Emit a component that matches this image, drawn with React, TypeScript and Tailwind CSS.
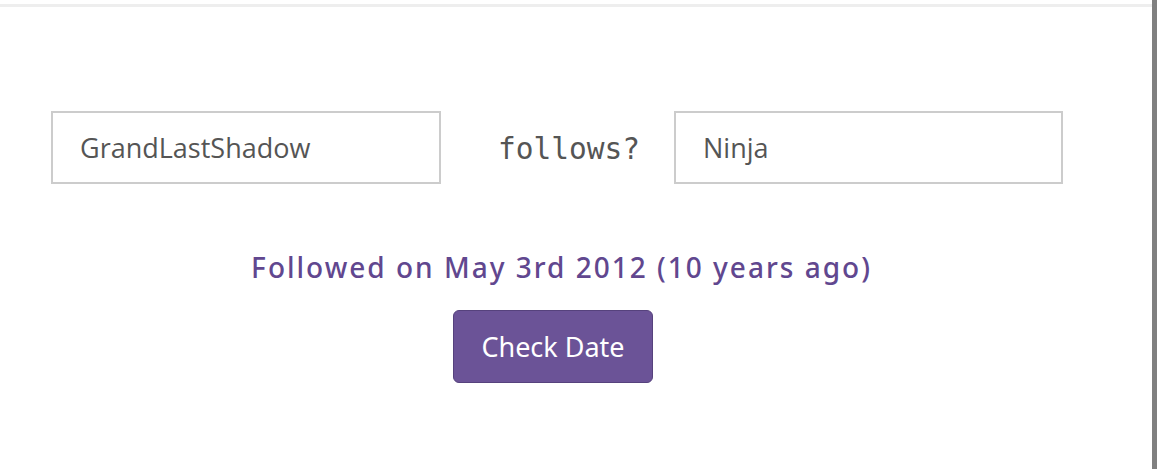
import React from "react";

const App = () => {
  return (
    <div className="flex h-[469px] w-full overflow-hidden bg-white">
      <div className="flex flex-1 flex-col">
        <div className="mt-[4px] h-[3px] bg-[#eeeeee]" />

        <main className="flex w-[1106px] flex-col items-center pt-[104px]">
          <div className="flex w-full items-center pl-[51px]">
            <input
              readOnly
              value="GrandLastShadow"
              className="h-[73px] w-[390px] border-2 border-[#cccccc] px-[27px] font-['Open_Sans',sans-serif] text-[27px] text-[#555555] outline-none"
            />
            <span className="w-[233px] pt-[3px] pl-[57px] font-['DejaVu_Sans_Mono',monospace] text-[29.5px] text-[#555555]">
              follows?
            </span>
            <input
              readOnly
              value="Ninja"
              className="h-[73px] w-[389px] border-2 border-[#cccccc] px-[27px] font-['Open_Sans',sans-serif] text-[27px] text-[#555555] outline-none"
            />
          </div>

          <p className="mt-[66px] pl-[17px] font-['Noto_Sans',sans-serif] text-[28px] font-medium leading-[34px] tracking-[2px] text-[#61478f]">
            Followed on May 3rd 2012 (10 years ago)
          </p>

          <button className="mt-[26px] h-[73px] w-[200px] rounded-[6px] border border-[#56427d] bg-[#6b5397] pt-[2px] font-['Noto_Sans',sans-serif] text-[27px] text-white">
            Check Date
          </button>
        </main>
      </div>
      <div className="w-[5px] bg-[#808080]" />
    </div>
  );
};

export default App;
